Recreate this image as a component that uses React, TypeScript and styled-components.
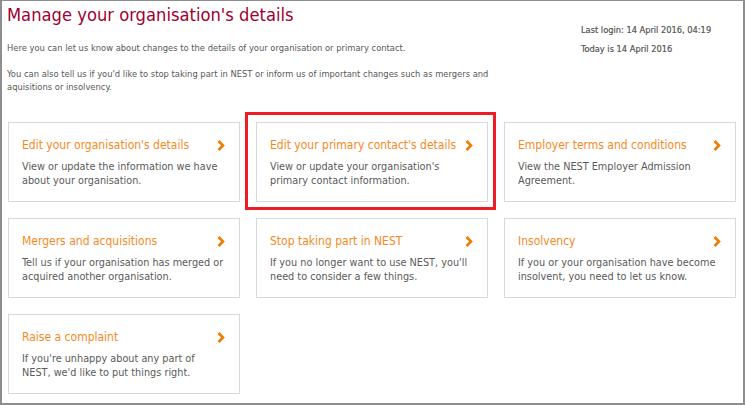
import React from "react";
import styled, { createGlobalStyle } from "styled-components";

const GlobalStyle = createGlobalStyle`
  html, body {
    margin: 0;
    padding: 0;
    background: #fff;
  }
`;

const StyledFrame = styled.div`
  box-sizing: border-box;
  width: 745px;
  height: 405px;
  border-style: solid;
  border-color: #8e8e8e;
  border-width: 1px 2px 2px 2px;
  padding: 1px 7px 0 5px;
  font-family: "DejaVu Sans Condensed", "DejaVu Sans", sans-serif;
  color: #575757;
  overflow: hidden;
`;

const StyledHeader = styled.div`
  display: flex;
  justify-content: space-between;
`;

const StyledIntro = styled.div`
  width: 500px;
`;

const StyledTitle = styled.h1`
  margin: 0;
  font-size: 18.2px;
  line-height: 26px;
  font-weight: normal;
  color: #a1002f;
`;

const StyledIntroText = styled.p`
  margin: 13px 0 0;
  font-size: 9.3px;
  line-height: 13px;
`;

const StyledLogin = styled.div`
  width: 155px;
  padding-top: 18px;
  font-size: 9.2px;
  font-weight: normal;
  line-height: 19px;
  color: #555;
  -webkit-text-stroke: 0.2px #555;
`;

const StyledGrid = styled.div`
  display: grid;
  grid-template-columns: repeat(3, 232px);
  grid-auto-rows: 80px;
  gap: 16px;
  margin-top: 29px;
  padding-left: 1px;
`;

const StyledCard = styled.a<{ $highlight?: boolean }>`
  position: relative;
  box-sizing: border-box;
  display: block;
  border: 1px solid #d8d8d8;
  padding: 15px 14px 0 13px;
  text-decoration: none;

  ${(p) =>
    p.$highlight &&
    `
    &::after {
      content: "";
      position: absolute;
      top: -11px;
      left: -12px;
      right: -9px;
      bottom: -9px;
      border: 3px solid #ee1d25;
    }
  `}
`;

const StyledCardHead = styled.div`
  display: flex;
  justify-content: space-between;
  align-items: center;
  font-size: 12px;
  line-height: 14px;
  color: #f7891e;
`;

const StyledChevron = styled.svg`
  width: 8px;
  height: 11px;
  flex: none;
`;

const StyledCardText = styled.p`
  margin: 8px 0 0;
  font-size: 10.8px;
  line-height: 14px;
  color: #5a5a5a;
`;

const cards = [
  {
    title: "Edit your organisation's details",
    text: "View or update the information we have about your organisation.",
  },
  {
    title: "Edit your primary contact's details",
    text: "View or update your organisation's primary contact information.",
    highlight: true,
  },
  {
    title: "Employer terms and conditions",
    text: "View the NEST Employer Admission Agreement.",
  },
  {
    title: "Mergers and acquisitions",
    text: "Tell us if your organisation has merged or acquired another organisation.",
  },
  {
    title: "Stop taking part in NEST",
    text: "If you no longer want to use NEST, you'll need to consider a few things.",
  },
  {
    title: "Insolvency",
    text: "If you or your organisation have become insolvent, you need to let us know.",
  },
  {
    title: "Raise a complaint",
    text: "If you're unhappy about any part of NEST, we'd like to put things right.",
  },
];

const Chevron = () => (
  <StyledChevron viewBox="0 0 8 11">
    <path d="M1.5 1 L6 5.5 L1.5 10" fill="none" stroke="#f07c00" strokeWidth="2.6" />
  </StyledChevron>
);

const App = () => {
  return (
    <StyledFrame>
      <GlobalStyle />
      <StyledHeader>
        <StyledIntro>
          <StyledTitle>Manage your organisation's details</StyledTitle>
          <StyledIntroText>
            Here you can let us know about changes to the details of your organisation or primary
            contact.
          </StyledIntroText>
          <StyledIntroText>
            You can also tell us if you'd like to stop taking part in NEST or inform us of important
            changes such as mergers and aquisitions or insolvency.
          </StyledIntroText>
        </StyledIntro>
        <StyledLogin>
          <div>Last login: 14 April 2016, 04:19</div>
          <div>Today is 14 April 2016</div>
        </StyledLogin>
      </StyledHeader>
      <StyledGrid>
        {cards.map((c) => (
          <StyledCard key={c.title} href="#" $highlight={c.highlight}>
            <StyledCardHead>
              <span>{c.title}</span>
              <Chevron />
            </StyledCardHead>
            <StyledCardText>{c.text}</StyledCardText>
          </StyledCard>
        ))}
      </StyledGrid>
    </StyledFrame>
  );
};

export default App;
